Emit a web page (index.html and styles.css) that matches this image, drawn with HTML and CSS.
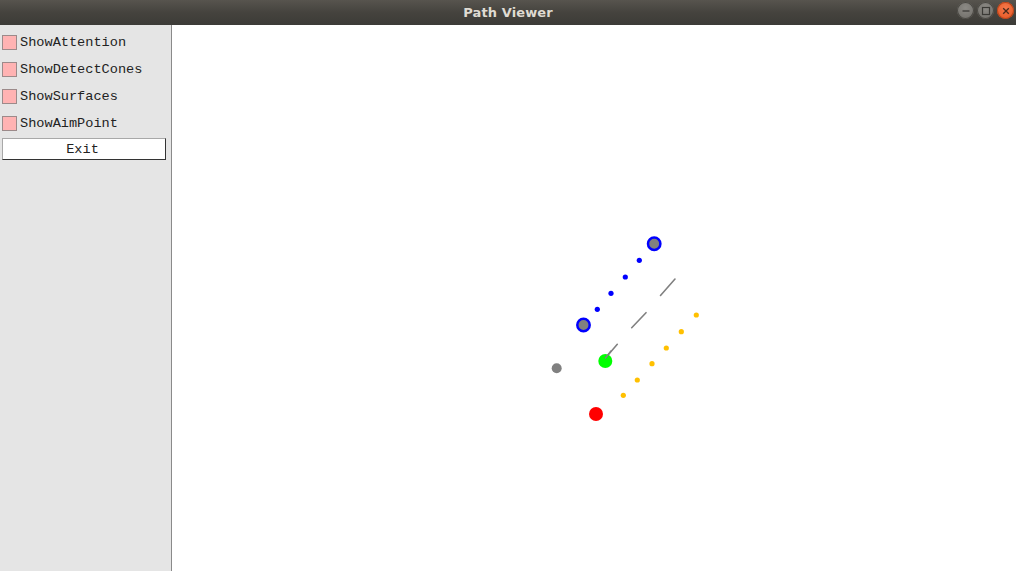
FILE: index.html
```html
<!DOCTYPE html>
<html>
<head>
<meta charset="utf-8">
<link rel="stylesheet" href="styles.css">
</head>
<body>
<div class="window">
  <header class="titlebar">
    <div class="title">Path Viewer</div>
    <div class="controls">
      <span class="wbtn min"><svg width="16" height="16" viewBox="0 0 16 16"><line x1="4.5" y1="8" x2="11.5" y2="8" stroke="#3b3a36" stroke-width="1.3"/></svg></span>
      <span class="wbtn max"><svg width="16" height="16" viewBox="0 0 16 16"><rect x="4.5" y="4.5" width="7" height="7" fill="none" stroke="#3b3a36" stroke-width="1.2"/></svg></span>
      <span class="wbtn close"><svg width="16" height="16" viewBox="0 0 16 16"><path d="M5.2 5.2 L10.8 10.8 M10.8 5.2 L5.2 10.8" stroke="#4a2a1c" stroke-width="1.3"/></svg></span>
    </div>
  </header>
  <div class="body">
    <aside class="sidebar">
      <label class="check"><span class="box"></span><span class="lbl">ShowAttention</span></label>
      <label class="check"><span class="box"></span><span class="lbl">ShowDetectCones</span></label>
      <label class="check"><span class="box"></span><span class="lbl">ShowSurfaces</span></label>
      <label class="check"><span class="box"></span><span class="lbl">ShowAimPoint</span></label>
      <button class="exit">Exit</button>
    </aside>
    <main class="canvas">
      <svg class="plot" width="844" height="546" viewBox="172 25 844 546">
        <g stroke="#808080" stroke-width="1.6" stroke-linecap="round">
          <line x1="675" y1="279" x2="660.5" y2="295.5"/>
          <line x1="646" y1="312.7" x2="631.7" y2="327.7"/>
          <line x1="617.3" y1="344.3" x2="605.7" y2="357.7"/>
        </g>
        <g fill="#0000ff">
          <circle cx="639.3" cy="260.3" r="2.6"/>
          <circle cx="625.3" cy="277" r="2.6"/>
          <circle cx="611" cy="293.3" r="2.6"/>
          <circle cx="597.3" cy="309.3" r="2.6"/>
        </g>
        <g fill="#808080" stroke="#0000ff" stroke-width="2.5">
          <circle cx="654.2" cy="243.7" r="6.2"/>
          <circle cx="583.5" cy="325" r="6.2"/>
        </g>
        <g fill="#ffc000">
          <circle cx="696.3" cy="315" r="2.6"/>
          <circle cx="681.3" cy="331.7" r="2.6"/>
          <circle cx="666.3" cy="348" r="2.6"/>
          <circle cx="652" cy="363.7" r="2.6"/>
          <circle cx="637.3" cy="380" r="2.6"/>
          <circle cx="623.3" cy="395.3" r="2.6"/>
        </g>
        <circle cx="605.3" cy="361" r="7" fill="#00ff00"/>
        <line x1="611" y1="351" x2="605.5" y2="358" stroke="#808080" stroke-width="1.6" stroke-linecap="round"/>
        <circle cx="556.7" cy="368.3" r="5" fill="#808080"/>
        <circle cx="596" cy="414" r="7" fill="#ff0000"/>
      </svg>
    </main>
  </div>
</div>
</body>
</html>
```
FILE: styles.css
```css
html, body {
  margin: 0;
  padding: 0;
  width: 1016px;
  height: 571px;
  overflow: hidden;
  background: #ffffff;
}
.window {
  display: flex;
  flex-direction: column;
  width: 1016px;
  height: 571px;
}
.titlebar {
  height: 25px;
  flex: 0 0 25px;
  background: linear-gradient(#57544e, #45433e 50%, #3c3b37);
  position: relative;
  display: flex;
  align-items: center;
  justify-content: center;
}
.title {
  font-family: "DejaVu Sans", sans-serif;
  font-weight: bold;
  font-size: 13px;
  color: #dfdbd2;
  letter-spacing: 0.1px;
}
.controls {
  position: absolute;
  right: 2px;
  top: 2px;
  display: flex;
  gap: 3px;
}
.wbtn {
  width: 17px;
  height: 17px;
  border-radius: 50%;
  display: flex;
  align-items: center;
  justify-content: center;
  background: radial-gradient(circle at 50% 35%, #8c8a85, #6d6b66);
  box-shadow: inset 0 0 0 1px #4a4843;
}
.wbtn.close {
  background: radial-gradient(circle at 50% 35%, #f5784a, #e3531f);
  box-shadow: inset 0 0 0 1px #b7441a;
}
.body {
  flex: 1;
  display: flex;
}
.sidebar {
  width: 172px;
  flex: 0 0 172px;
  box-sizing: border-box;
  background: #e5e5e5;
  border-right: 1px solid #8a8a8a;
  display: flex;
  flex-direction: column;
  padding: 4px 0 0 2px;
}
.check {
  display: flex;
  align-items: center;
  height: 27px;
  gap: 3px;
}
.box {
  width: 13px;
  height: 13px;
  background: #ffb3b3;
  border: 1px solid #9c8a8a;
}
.lbl {
  font-family: "Liberation Mono", "DejaVu Sans Mono", monospace;
  font-size: 13.6px;
  color: #222;
  line-height: 16px;
}
.exit {
  margin-top: 1px;
  width: 164px;
  height: 22px;
  box-sizing: border-box;
  background: #ffffff;
  border-style: solid;
  border-width: 1px;
  border-color: #a8a8a8 #333333 #333333 #a8a8a8;
  font-family: "Liberation Mono", "DejaVu Sans Mono", monospace;
  font-size: 13.6px;
  color: #222;
  padding: 0 3px 0 0;
}
.canvas {
  flex: 1;
  background: #ffffff;
}
.plot {
  display: block;
}
```
